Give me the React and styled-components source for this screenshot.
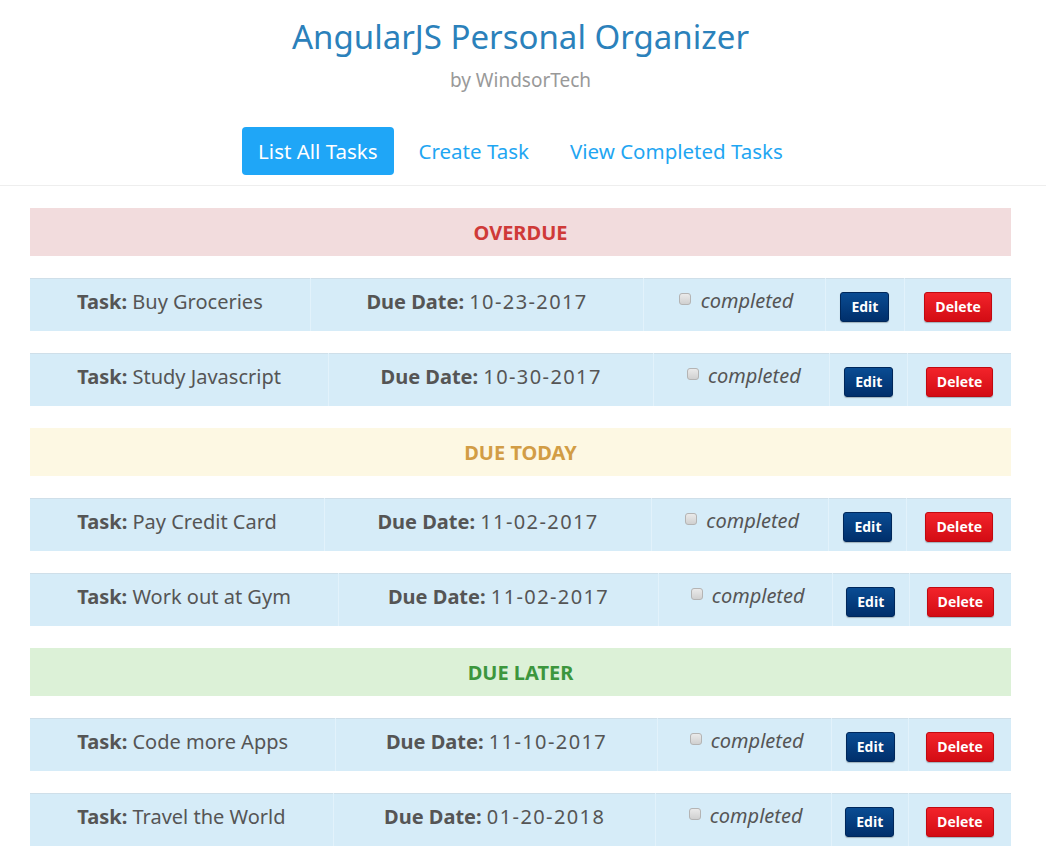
import React from "react";
import styled, { createGlobalStyle } from "styled-components";

const Global = createGlobalStyle`
  html, body { margin: 0; padding: 0; background: #fff; }
  body { font-family: "Noto Sans", "Open Sans", sans-serif; color: #555; }
  * { box-sizing: border-box; }
`;

const Page = styled.div`
  width: 1046px;
  padding-bottom: 20px;
`;

const Header = styled.header`
  display: flex;
  flex-direction: column;
  align-items: center;
  padding: 14px 5px 0 0;
  border-bottom: 1px solid #eeeeee;
`;

const Title = styled.h1`
  margin: 0;
  font-size: 33px;
  font-weight: 400;
  line-height: 46px;
  color: #2b81bb;
`;

const Subtitle = styled.div`
  margin-top: 7px;
  font-size: 19px;
  line-height: 26px;
  color: #999;
`;

const Nav = styled.nav`
  display: flex;
  gap: 9px;
  margin: 34px 0 10px;
`;

const NavLink = styled.a`
  display: block;
  padding: 10px 16px 10px;
  border-radius: 4px;
  font-size: 20.5px;
  line-height: 28px;
  text-decoration: none;
  cursor: pointer;
  color: ${(p) => (p.$active ? "#fff" : "#1fa6f2")};
  background: ${(p) => (p.$active ? "#1fa6f7" : "transparent")};
`;

const Main = styled.main`
  display: flex;
  flex-direction: column;
  gap: 22px;
  margin: 22px 35px 0 30px;
`;

const sectionColors = {
  overdue: { bg: "#f2dcdd", fg: "#cf3a38" },
  today: { bg: "#fdf8e3", fg: "#d29d45" },
  later: { bg: "#dcf1d7", fg: "#3c963d" },
};

const SectionHeader = styled.div`
  height: 48px;
  display: flex;
  align-items: center;
  justify-content: center;
  font-size: 20px;
  font-weight: 700;
  text-transform: uppercase;
  background: ${(p) => sectionColors[p.$kind].bg};
  color: ${(p) => sectionColors[p.$kind].fg};
`;

const Table = styled.table`
  width: 100%;
  height: 53px;
  border-collapse: collapse;
  background: #d6ecf8;
  border-top: 1px solid #cfdfe9;
`;

const Cell = styled.td`
  padding: 9px 2px 8px;
  vertical-align: top;
  text-align: center;
  font-size: 20px;
  line-height: 28px;
  color: #555;
  white-space: nowrap;
  & + & { border-left: 1px solid #e2f2fb; }
`;

const Label = styled.b`
  font-weight: 700;
`;

const DateValue = styled.span`
  letter-spacing: 1.4px;
`;

const Check = styled.input`
  appearance: none;
  width: 12px;
  height: 12px;
  margin: 0 4px;
  vertical-align: 4px;
  border: 1px solid #b4b4b4;
  border-radius: 3px;
  background: linear-gradient(#eaeaea, #d0d0d0);
`;

const Completed = styled.span`
  font-style: italic;
  position: relative;
  top: -1px;
`;

const Button = styled.button`
  display: inline-block;
  vertical-align: -3px;
  border-radius: 3px;
  padding: 6px 10px 7px;
  font-family: "Open Sans", "Noto Sans", sans-serif;
  font-size: 14px;
  font-weight: 700;
  line-height: 15px;
  color: #fff;
  cursor: pointer;
  background: ${(p) =>
    p.$danger
      ? "linear-gradient(#f2232a, #d30c14)"
      : "linear-gradient(#0a4c93, #002f6b)"};
  border: 1px solid ${(p) => (p.$danger ? "#c10910" : "#00275a")};
  box-shadow: 0 1px 1px rgba(0, 0, 0, 0.25);
`;

const sections = [
  {
    kind: "overdue",
    title: "Overdue",
    tasks: [
      { name: "Buy Groceries", due: "10-23-2017" },
      { name: "Study Javascript", due: "10-30-2017" },
    ],
  },
  {
    kind: "today",
    title: "Due Today",
    tasks: [
      { name: "Pay Credit Card", due: "11-02-2017" },
      { name: "Work out at Gym", due: "11-02-2017" },
    ],
  },
  {
    kind: "later",
    title: "Due Later",
    tasks: [
      { name: "Code more Apps", due: "11-10-2017" },
      { name: "Travel the World", due: "01-20-2018" },
    ],
  },
];

function TaskRow({ task }) {
  return (
    <Table>
      <tbody>
        <tr>
          <Cell>
            <Label>Task:</Label> {task.name}
          </Cell>
          <Cell>
            <Label>Due Date:</Label> <DateValue>{task.due}</DateValue>
          </Cell>
          <Cell>
            <Check type="checkbox" /> <Completed>completed</Completed>
          </Cell>
          <Cell>
            <Button>Edit</Button>
          </Cell>
          <Cell>
            <Button $danger>Delete</Button>
          </Cell>
        </tr>
      </tbody>
    </Table>
  );
}

export default function App() {
  return (
    <Page>
      <Global />
      <Header>
        <Title>AngularJS Personal Organizer</Title>
        <Subtitle>by WindsorTech</Subtitle>
        <Nav>
          <NavLink $active>List All Tasks</NavLink>
          <NavLink>Create Task</NavLink>
          <NavLink>View Completed Tasks</NavLink>
        </Nav>
      </Header>
      <Main>
        {sections.map((s) => (
          <React.Fragment key={s.kind}>
            <SectionHeader $kind={s.kind}>{s.title}</SectionHeader>
            {s.tasks.map((t) => (
              <TaskRow key={t.name} task={t} />
            ))}
          </React.Fragment>
        ))}
      </Main>
    </Page>
  );
}
